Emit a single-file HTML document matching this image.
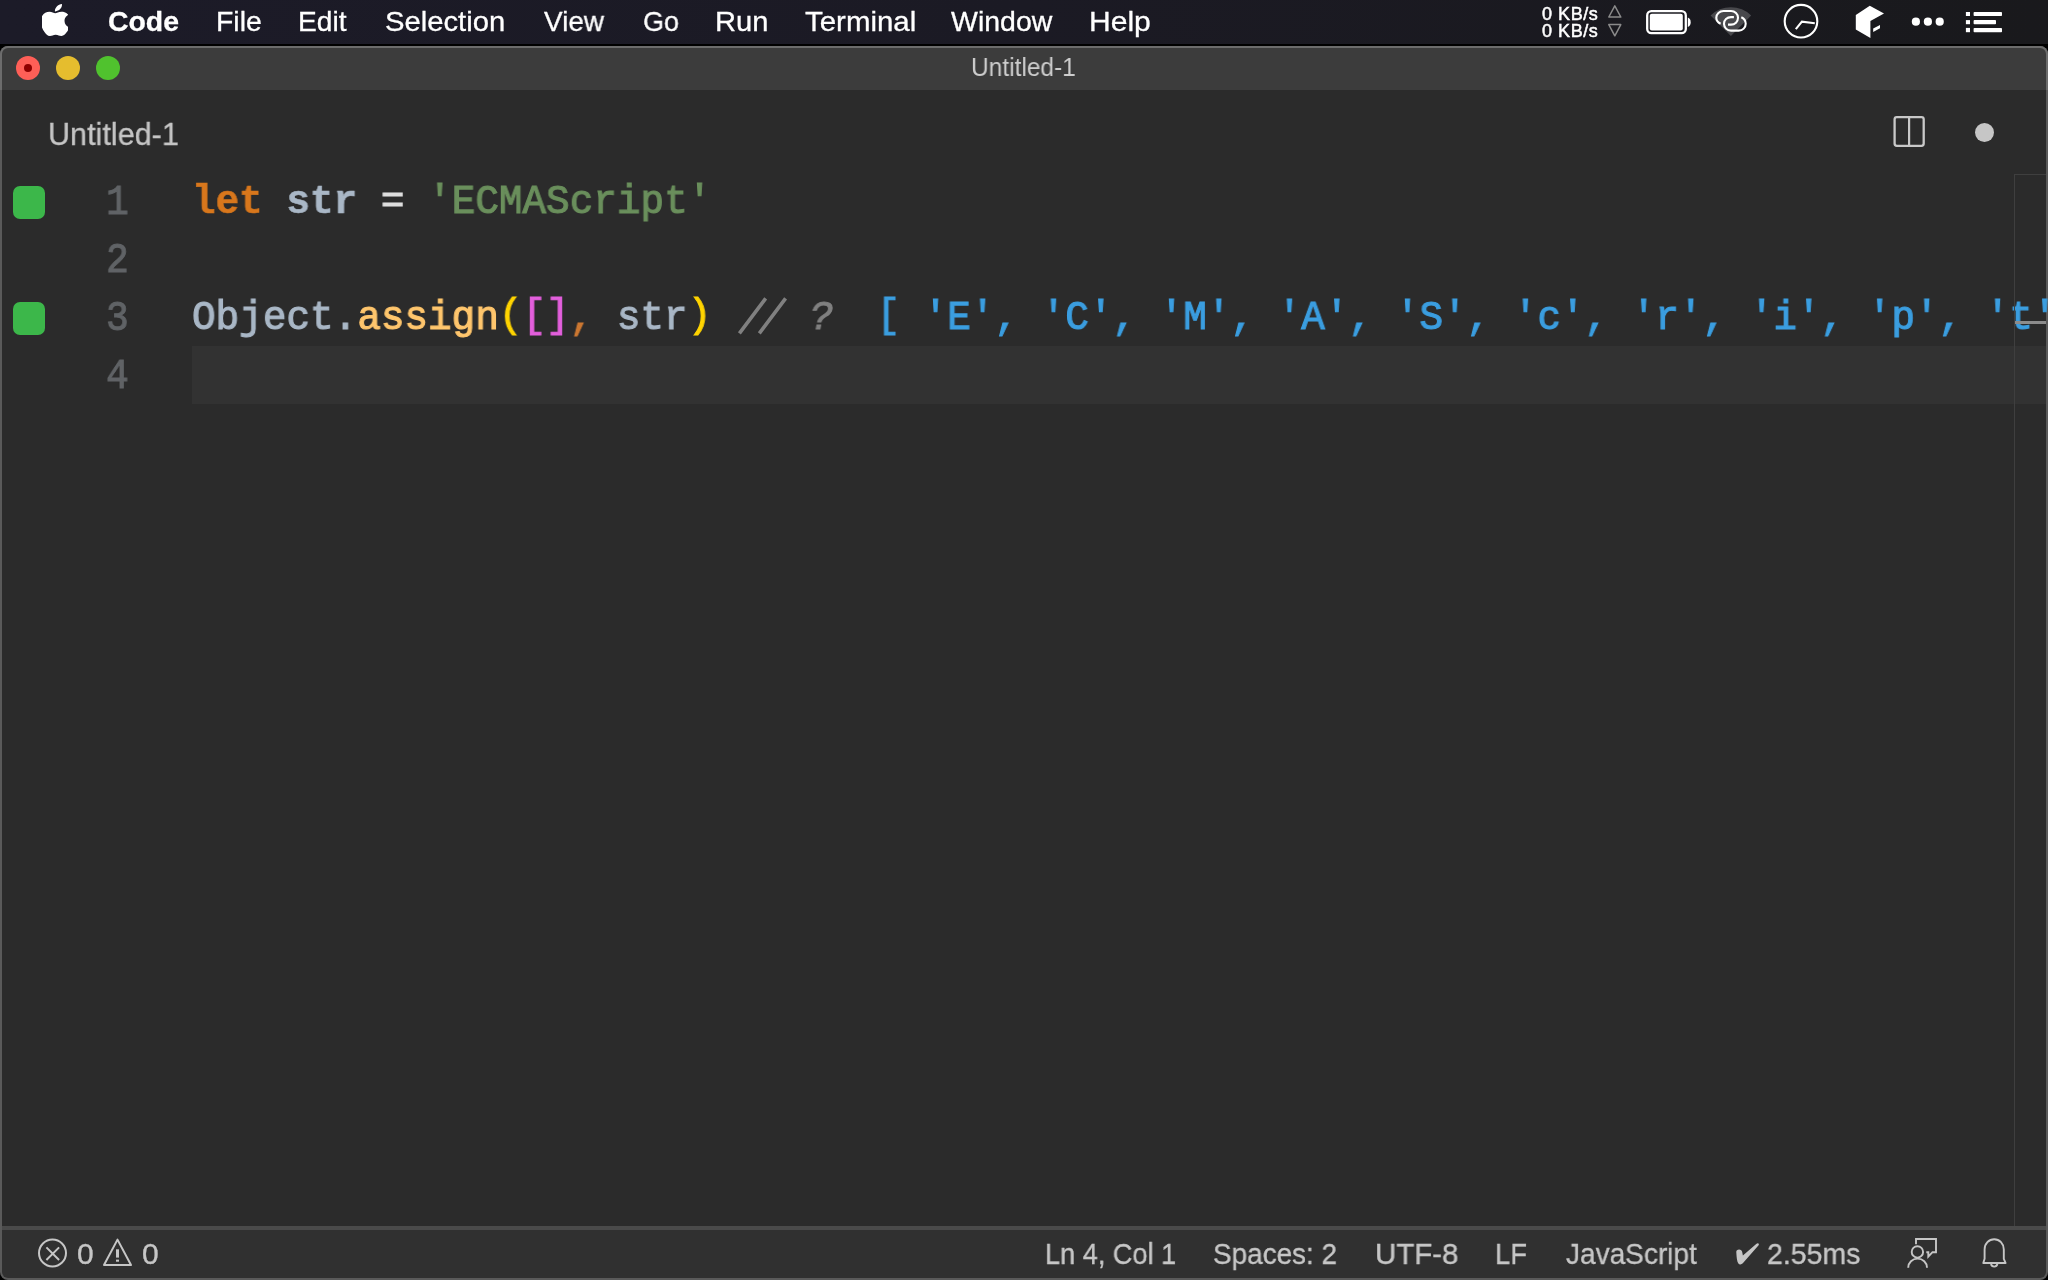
<!DOCTYPE html>
<html><head><meta charset="utf-8">
<style>
*{margin:0;padding:0;box-sizing:border-box}
html,body{width:2048px;height:1280px;overflow:hidden;background:#000}
body{position:relative;font-family:"Liberation Sans",sans-serif}
.a{position:absolute;white-space:pre}
.mi,.st,.a,.code,.ln{will-change:transform}
.st{-webkit-text-stroke:0.35px currentColor}
.mi{-webkit-text-stroke:0.3px currentColor}
#menubar{position:absolute;left:0;top:0;width:2048px;height:43.5px;background:linear-gradient(90deg,#1c1b28 0%,#1b1a24 50%,#19191c 100%)}
.mi{position:absolute;top:0;height:44px;line-height:43.5px;font-size:28px;color:#fff;white-space:pre;transform-origin:0 0}
#win{position:absolute;left:0;top:46px;width:2048px;height:1234px;background:#5a5a5a;border-radius:8px;overflow:hidden}
#wtop{position:absolute;left:0;top:0;width:2048px;height:44px;background:#6c6c6c}
#titlebar{position:absolute;left:2px;top:2px;width:2044px;height:42px;background:#3c3c3c;border-radius:6px 6px 0 0}
#editorarea{position:absolute;left:2px;top:44px;width:2044px;height:1136px;background:#2b2b2b}
#status{position:absolute;left:2px;top:1180px;width:2044px;height:52px;background:#303030;border-top:4px solid #4a4a4a;border-radius:0 0 6px 6px}
.tl{position:absolute;top:8px;width:24px;height:24px;border-radius:50%}
.code{position:absolute;left:192px;font-family:"Liberation Mono",monospace;font-size:40.5px;white-space:pre;transform-origin:0 0;transform:scaleX(0.97107);line-height:58px;height:58px}
.code b{font-style:normal}
.br{position:relative;top:-2px}
.code,.ln{-webkit-text-stroke:1.1px currentColor}
.code b{-webkit-text-stroke:0.6px currentColor}
.ln{position:absolute;font-family:"Liberation Mono",monospace;font-size:42px;color:#606366;line-height:58px;transform-origin:0 0;transform:scaleX(0.9)}
.gs{position:absolute;left:12.7px;width:32px;height:32.6px;background:#3cb74a;border-radius:7px}
.st{position:absolute;top:0;height:48px;line-height:48px;font-size:30px;color:#c6c6c6;white-space:pre;transform-origin:0 0}
</style></head>
<body>
<div id="menubar">
  <svg class="a" style="left:42px;top:4px" width="26" height="32" viewBox="3.05 0 17.9 24" preserveAspectRatio="none"><path fill="#fff" d="M12.152 6.896c-.948 0-2.415-1.078-3.96-1.040-2.040.027-3.910 1.183-4.961 3.014-2.117 3.675-.546 9.103 1.519 12.090 1.013 1.454 2.208 3.090 3.792 3.039 1.520-.065 2.090-.987 3.935-.987 1.831 0 2.350.987 3.960.948 1.637-.026 2.676-1.480 3.676-2.948 1.156-1.688 1.636-3.325 1.662-3.415-.039-.013-3.182-1.221-3.220-4.857-.026-3.040 2.480-4.494 2.597-4.559-1.429-2.090-3.623-2.324-4.390-2.376-2-.156-3.675 1.090-4.610 1.090zM15.530 3.830c.843-1.012 1.400-2.427 1.245-3.830-1.207.052-2.662.805-3.532 1.818-.780.896-1.454 2.338-1.273 3.714 1.338.104 2.715-.688 3.559-1.701"/></svg>
  <div class="mi" style="left:108px;font-weight:bold;transform:scaleX(1.014)">Code</div>
  <div class="mi" style="left:216px;transform:scaleX(1.015)">File</div>
  <div class="mi" style="left:297.5px;transform:scaleX(1.005)">Edit</div>
  <div class="mi" style="left:385px;transform:scaleX(1.043)">Selection</div>
  <div class="mi" style="left:543.5px;transform:scaleX(0.995)">View</div>
  <div class="mi" style="left:642.5px;transform:scaleX(0.964)">Go</div>
  <div class="mi" style="left:715px;transform:scaleX(1.04)">Run</div>
  <div class="mi" style="left:805px;transform:scaleX(1.051)">Terminal</div>
  <div class="mi" style="left:951px;transform:scaleX(1.017)">Window</div>
  <div class="mi" style="left:1088.5px;transform:scaleX(1.073)">Help</div>
  <div class="a" style="left:1542px;top:4.7px;font-size:18px;line-height:18px;color:#fff;-webkit-text-stroke:0.5px #fff;letter-spacing:0.55px">0 KB/s</div>
  <div class="a" style="left:1542px;top:22.2px;font-size:18px;line-height:18px;color:#fff;-webkit-text-stroke:0.5px #fff;letter-spacing:0.55px">0 KB/s</div>
  <svg class="a" style="left:1600px;top:0" width="30" height="44" viewBox="0 0 30 44"><path d="M14.8 5.8 L20.8 17 H8.8 Z" fill="none" stroke="#8a8a8a" stroke-width="1.5" stroke-linejoin="round"/><path d="M14.8 35.8 L20.8 24.6 H8.8 Z" fill="none" stroke="#8a8a8a" stroke-width="1.5" stroke-linejoin="round"/></svg>
  <svg class="a" style="left:1640px;top:0" width="60" height="44" viewBox="0 0 60 44"><rect x="7.2" y="11.2" width="38.6" height="22" rx="4.2" fill="none" stroke="#fff" stroke-width="2.3"/><rect x="9.8" y="13.8" width="33" height="16.6" rx="2" fill="#fff"/><path d="M47.8 17.5 A 4.2 5 0 0 1 47.8 27 Z" fill="#fff"/></svg>
  <svg class="a" style="left:1700px;top:0" width="60" height="44" viewBox="0 0 60 44"><path d="M30.9 35.9 L10.6 15.6 A 28.7 28.7 0 0 1 51.2 15.6 Z" fill="#48484c"/><path d="M20.6 23.8 C 18 22.6 16.3 20.5 16.3 17.8 C 16.3 13.8 19.5 11 23.5 11 L 31 11 C 35 11 38 14 38 17.8 C 38 21.7 35 24.6 31 24.6 L 28 24.6" fill="none" stroke="#fff" stroke-width="2.1"/><path d="M33.9 17.1 L 31 17.1 C 27 17.1 24 20 24 23.8 C 24 27.6 27 30.6 31 30.6 L 38.7 30.6 C 42.7 30.6 45.7 27.6 45.7 23.8 C 45.7 20.8 44 18.4 41.3 17.2" fill="none" stroke="#fff" stroke-width="2.1"/></svg>
  <svg class="a" style="left:1770px;top:0" width="60" height="44" viewBox="0 0 60 44"><circle cx="31" cy="21.2" r="16.3" fill="none" stroke="#fff" stroke-width="2.1"/><path d="M25.8 29.2 L31.9 21.7 L44.8 23.3" fill="none" stroke="#fff" stroke-width="2.1"/></svg>
  <svg class="a" style="left:1850px;top:0" width="40" height="44" viewBox="0 0 40 44"><path d="M19.8 5.7 L34 13.6 L20.4 21 L20.4 38 L5.8 29.6 L5.8 14.9 Z" fill="#fff"/><path d="M23.2 28.5 L30 25.1 L30 28.2 L23.2 31.9 Z" fill="#fff"/></svg>
  <svg class="a" style="left:1900px;top:0" width="50" height="44" viewBox="0 0 50 44"><circle cx="15.9" cy="21.7" r="4.1" fill="#fff"/><circle cx="27.9" cy="21.7" r="4.1" fill="#fff"/><circle cx="39.7" cy="21.7" r="4.1" fill="#fff"/></svg>
  <svg class="a" style="left:1960px;top:0" width="50" height="44" viewBox="0 0 50 44"><rect x="5.9" y="12" width="4.1" height="4" fill="#fff"/><rect x="5.9" y="20.1" width="4.1" height="4.1" fill="#fff"/><rect x="5.9" y="27.9" width="4.1" height="4.3" fill="#fff"/><rect x="13.6" y="12" width="28.4" height="4" rx="0.8" fill="#fff"/><rect x="13.6" y="20.1" width="22.4" height="4.1" rx="0.8" fill="#fff"/><rect x="13.6" y="27.9" width="28.4" height="4.3" rx="0.8" fill="#fff"/></svg>

</div>
<div id="win">
  <div id="wtop"></div>
  <div id="titlebar">
    <div class="tl" style="left:14px;background:#fe5f57"></div>
    <div class="a" style="left:22px;top:16px;width:8px;height:8px;border-radius:50%;background:#8e0000"></div>
    <div class="tl" style="left:54px;background:#e5bd2e"></div>
    <div class="tl" style="left:94px;background:#50c22e"></div>
    <div class="a" style="left:969px;top:-2px;height:42px;line-height:42px;font-size:25px;color:#cdcdcd;transform:scaleX(0.98);transform-origin:0 0">Untitled-1</div>
  </div>
  <div id="editorarea"></div>
  <div id="status"></div>
</div>
<div id="content">
  <div class="a" style="left:192px;top:346px;width:1854px;height:58px;background:#323232"></div>
  <div class="a" style="left:47.5px;top:111.5px;font-size:32px;line-height:44px;color:#c5c5c5;transform:scaleX(0.955);transform-origin:0 0;-webkit-text-stroke:0.3px #c5c5c5">Untitled-1</div>
  <svg class="a" style="left:1892px;top:115px" width="34" height="33" viewBox="0 0 34 33"><rect x="2.6" y="2.1" width="29.1" height="28.7" rx="2.2" fill="none" stroke="#c8c8c8" stroke-width="2.3"/><rect x="16" y="2" width="2.2" height="29" fill="#c8c8c8"/></svg>
  <div class="a" style="left:1975px;top:123.1px;width:19px;height:19px;border-radius:50%;background:#c6c6c6"></div>
  <div class="gs" style="top:186.2px"></div>
  <div class="gs" style="top:302.2px"></div>
  <div class="ln" style="left:106px;top:174px">1</div>
  <div class="ln" style="left:106px;top:232px">2</div>
  <div class="ln" style="left:106px;top:290px">3</div>
  <div class="ln" style="left:106px;top:348px">4</div>
  <div class="code" style="top:173px"><b style="color:#d8771c">let</b> <b style="color:#a9b7c6">str</b> <span style="color:#dedede">=</span> <span style="color:#6a8f5c">'ECMAScript'</span></div>
  <div class="code" style="top:288.8px"><span style="color:#a9b7c6">Object.</span><span style="color:#ffc66d">assign</span><span class="br" style="color:#ffd400">(</span><span class="br" style="color:#e35fdc">[]</span><span style="color:#cc7832">,</span> <span style="color:#a9b7c6">str</span><span class="br" style="color:#ffd400">)</span>    <i style="color:#808080;position:relative;left:4px">?</i>  <span style="color:#3b9ee0"><span class="br">[</span> 'E', 'C', 'M', 'A', 'S', 'c', 'r', 'i', 'p', 't' ]</span></div>
  <svg class="a" style="left:730px;top:290px" width="64" height="50" viewBox="730 290 64 50"><path d="M765.7 298.4 L739.4 333.3 M785.6 298.4 L759.3 333.3" stroke="#808080" stroke-width="3.6"/></svg>
  <div class="a" style="left:2014px;top:174px;width:1px;height:1052px;background:#3f3f3f"></div>
  <div class="a" style="left:2014px;top:174px;width:32px;height:1px;background:#3f3f3f"></div>
  <div class="a" style="left:2015px;top:320.5px;width:31px;height:3px;background:#8c8c8c"></div>
</div>

<div id="statusc">
  <svg class="a" style="left:30px;top:1230px" width="140" height="48" viewBox="0 0 140 48"><circle cx="22.5" cy="23" r="13.5" fill="none" stroke="#c6c6c6" stroke-width="2"/><path d="M16.4 17.4 L29.1 30 M29.1 17.4 L16.4 30" stroke="#c6c6c6" stroke-width="2"/><path d="M87.5 9.6 L101 35 H74 Z" fill="none" stroke="#c6c6c6" stroke-width="2" stroke-linejoin="round"/><rect x="86" y="19.3" width="3" height="8.3" fill="#c6c6c6"/><rect x="86" y="29.6" width="3" height="2.1" fill="#c6c6c6"/></svg>
  <div class="st" style="left:77px;top:1230px">0</div>
  <div class="st" style="left:142px;top:1230px">0</div>
  <div class="st" style="left:1044.5px;top:1230px;transform:scaleX(0.9035)">Ln 4, Col 1</div>
  <div class="st" style="left:1213.3px;top:1230px;transform:scaleX(0.9295)">Spaces: 2</div>
  <div class="st" style="left:1374.8px;top:1230px;transform:scaleX(0.982)">UTF-8</div>
  <div class="st" style="left:1495.2px;top:1230px;transform:scaleX(0.9125)">LF</div>
  <div class="st" style="left:1566px;top:1230px;transform:scaleX(0.934)">JavaScript</div>
  <svg class="a" style="left:1728px;top:1236px" width="36" height="34" viewBox="0 0 36 34"><path d="M8.3 16.2 C 8.1 14.4 9.4 13.6 11.1 13.6 C 12.8 13.6 13.9 14.5 14.2 16 L 14.9 19.6 L 28.2 7.9 C 29.8 6.6 31.6 7.4 30.6 9.3 L 14.8 27.3 C 13.3 28.8 11.2 28.7 10.2 27.2 C 9 25.4 8.6 21.5 8.3 16.2 Z" fill="#c6c6c6"/></svg>
  <div class="st" style="left:1767px;top:1230px;transform:scaleX(0.948)">2.55ms</div>
  <svg class="a" style="left:1890px;top:1228px" width="158" height="52" viewBox="0 0 158 52"><path d="M26 16.2 V11 H46 V24.2 H42.5 L38.3 28.6 V24.2 H36.3" fill="none" stroke="#c6c6c6" stroke-width="1.9"/><circle cx="27.4" cy="23.9" r="5.7" fill="none" stroke="#c6c6c6" stroke-width="1.9"/><path d="M18.2 39.7 A 9.4 9.1 0 0 1 37 39.7" fill="none" stroke="#c6c6c6" stroke-width="1.9"/><path d="M93.3 35 H115.6 L113.8 30.8 V21.4 A 9.6 10.2 0 0 0 94.6 21.4 V30.8 Z" fill="none" stroke="#c6c6c6" stroke-width="1.9" stroke-linejoin="round"/><path d="M101 36.1 A 3.3 3.3 0 0 0 107.4 36.1" fill="none" stroke="#c6c6c6" stroke-width="1.9"/></svg>
</div>
</body></html>
